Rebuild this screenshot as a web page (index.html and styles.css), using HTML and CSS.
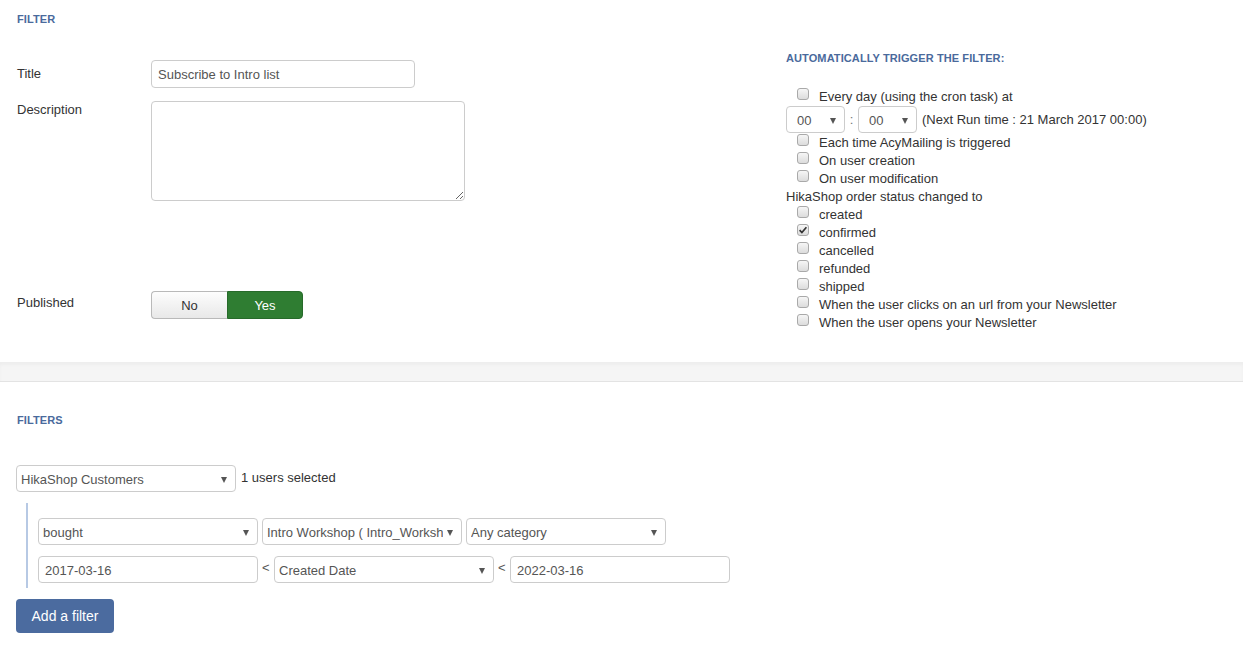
FILE: index.html
```html
<!DOCTYPE html>
<html lang="en">
<head>
<meta charset="utf-8">
<title>Filter</title>
<link rel="stylesheet" href="styles.css">
</head>
<body>
<section class="panel top">
  <h3 class="legend">Filter</h3>
  <div class="cols">
    <div class="left">
      <div class="row">
        <label class="lbl">Title</label>
        <input class="field title-input" type="text" value="Subscribe to Intro list">
      </div>
      <div class="row row-desc">
        <label class="lbl lbl-desc">Description</label>
        <textarea class="field desc"></textarea>
      </div>
      <div class="row row-pub">
        <label class="lbl lbl-pub">Published</label>
        <div class="btn-group">
          <span class="tbtn no">No</span>
          <span class="tbtn yes">Yes</span>
        </div>
      </div>
    </div>
    <div class="right">
      <h3 class="legend">Automatically trigger the filter:</h3>
      <div class="triggers">
        <div class="chk"><span class="cb"></span>Every day (using the cron task) at</div>
        <div class="time-row">
          <span class="sel"><select class="select time"><option>00</option></select></span>
          <span class="colon">:</span>
          <span class="sel"><select class="select time"><option>00</option></select></span>
          <span class="next">(Next Run time : 21 March 2017 00:00)</span>
        </div>
        <div class="chk"><span class="cb"></span>Each time AcyMailing is triggered</div>
        <div class="chk"><span class="cb"></span>On user creation</div>
        <div class="chk"><span class="cb"></span>On user modification</div>
        <div class="plain">HikaShop order status changed to</div>
        <div class="chk"><span class="cb"></span>created</div>
        <div class="chk"><span class="cb checked"><svg viewBox="0 0 12 12" width="12" height="12"><path d="M2.6 6.2 L4.9 8.6 L9.4 3.2" fill="none" stroke="#333" stroke-width="1.7"/></svg></span>confirmed</div>
        <div class="chk"><span class="cb"></span>cancelled</div>
        <div class="chk"><span class="cb"></span>refunded</div>
        <div class="chk"><span class="cb"></span>shipped</div>
        <div class="chk"><span class="cb"></span>When the user clicks on an url from your Newsletter</div>
        <div class="chk"><span class="cb"></span>When the user opens your Newsletter</div>
      </div>
    </div>
  </div>
</section>
<div class="band"></div>
<section class="panel bottom">
  <h3 class="legend">Filters</h3>
  <div class="type-row">
    <span class="sel"><select class="select w220"><option>HikaShop Customers</option></select></span>
    <span class="count">1 users selected</span>
  </div>
  <div class="filter-block">
    <div class="frow">
      <span class="sel"><select class="select w220"><option>bought</option></select></span>
      <span class="sel"><select class="select w200"><option>Intro Workshop ( Intro_Workshop )</option></select></span>
      <span class="sel"><select class="select w200"><option>Any category</option></select></span>
    </div>
    <div class="frow">
      <input class="field w220" type="text" value="2017-03-16">
      <span class="lt">&lt;</span>
      <span class="sel"><select class="select w220"><option>Created Date</option></select></span>
      <span class="lt">&lt;</span>
      <input class="field w220" type="text" value="2022-03-16">
    </div>
  </div>
  <button class="add-btn" type="button">Add a filter</button>
</section>
</body>
</html>
```

FILE: styles.css
```css
* { box-sizing: border-box; }
html, body { margin: 0; padding: 0; background: #fff; }
body {
  font-family: "Liberation Sans", Arial, sans-serif;
  font-size: 13px;
  line-height: 18px;
  color: #333;
  width: 1243px;
  height: 647px;
  overflow: hidden;
}
.legend {
  margin: 0;
  font-size: 11px;
  line-height: 18px;
  font-weight: bold;
  text-transform: uppercase;
  color: #4a6a9c;
  letter-spacing: 0.1px;
}
.panel.top { padding: 10px 0 31px 17px; }
.cols { display: grid; grid-template-columns: 769px 1fr; margin-top: 21px; }
.left { padding-top: 11px; }
.row { display: flex; align-items: flex-start; }
.lbl { width: 134px; flex: none; padding-top: 5px; color: #333; }
.lbl-desc { padding-top: 0; margin-top: 0; }
.lbl-pub { padding-top: 3px; }
.row-desc { margin-top: 13px; }
.row-pub { margin-top: 90px; }
.field {
  font-family: "Liberation Sans", Arial, sans-serif;
  font-size: 13px;
  color: #555;
  border: 1px solid #ccc;
  border-radius: 4px;
  background: #fff;
  height: 28px;
  padding: 1px 6px 0;
  margin: 0;
  outline: none;
}
.title-input { width: 264px; }
.desc { width: 314px; height: 100px; resize: vertical; display: block; }
.btn-group { display: flex; }
.tbtn {
  display: flex;
  align-items: center;
  justify-content: center;
  width: 76px;
  height: 28px;
  padding-top: 1px;
  font-size: 13px;
}
.tbtn.no {
  color: #333;
  border: 1px solid #b9b9b9;
  border-right: none;
  border-radius: 4px 0 0 4px;
  background: linear-gradient(#fdfdfd, #e8e8e8);
}
.tbtn.yes {
  color: #fff;
  background: #2f7d32;
  border: 1px solid #276a2a;
  border-radius: 0 4px 4px 0;
}
.triggers { margin-top: 20px; }
.chk { display: flex; align-items: flex-start; height: 18px; line-height: 20px; padding-left: 11px; }
.plain { height: 18px; line-height: 20px; }
.cb {
  width: 12px;
  height: 12px;
  flex: none;
  margin-top: 1px;
  margin-right: 10px;
  border: 1px solid #a9a9a9;
  border-radius: 3px;
  background: linear-gradient(#f6f6f6, #dcdcdc);
  position: relative;
}
.cb svg { position: absolute; left: -1px; top: -1px; }
.time-row { display: flex; align-items: center; height: 27px; margin-top: 1px; }
.colon { width: 13px; text-align: center; color: #777; }
.next { margin-left: 5px; }
.sel { position: relative; display: inline-block; flex: none; }
.sel::after {
  content: "";
  position: absolute;
  right: 9px;
  top: 50%;
  margin-top: -2px;
  border-left: 3.5px solid transparent;
  border-right: 3.5px solid transparent;
  border-top: 6px solid #555;
  pointer-events: none;
}
.select {
  -webkit-appearance: none;
  appearance: none;
  display: block;
  font-family: "Liberation Sans", Arial, sans-serif;
  font-size: 13px;
  color: #555;
  height: 27px;
  border: 1px solid #ccc;
  border-radius: 4px;
  background: #fff;
  padding: 1px 18px 0 4px;
  margin: 0;
  outline: none;
}
.select.time { width: 59px; padding-left: 10px; }
.w220 { width: 220px; }
.w200 { width: 200px; }
.band {
  height: 20px;
  background: #f5f5f5;
  border-top: 1px solid #eeeeee;
  border-bottom: 1px solid #e3e3e3;
  box-shadow: inset 0 2px 3px rgba(0,0,0,0.03);
}
.panel.bottom { padding: 29px 0 0 16px; }
.panel.bottom .legend { margin-left: 1px; }
.type-row { display: flex; align-items: center; gap: 5px; margin-top: 36px; height: 27px; }
.count { margin-top: -1px; }
.filter-block {
  margin: 11px 0 0 10px;
  border-left: 2px solid #b7c9e4;
  padding: 15px 0 5px 10px;
}
.frow { display: flex; align-items: center; gap: 4px; }
.frow + .frow { margin-top: 11px; }
.frow .field { height: 27px; }
.lt { width: 8px; color: #555; margin-top: -4px; }
.add-btn {
  display: block;
  margin-top: 11px;
  width: 98px;
  height: 34px;
  padding: 0;
  border: none;
  border-radius: 4px;
  background: #4b6b9f;
  color: #fff;
  font-family: "Liberation Sans", Arial, sans-serif;
  font-size: 14px;
}
```
